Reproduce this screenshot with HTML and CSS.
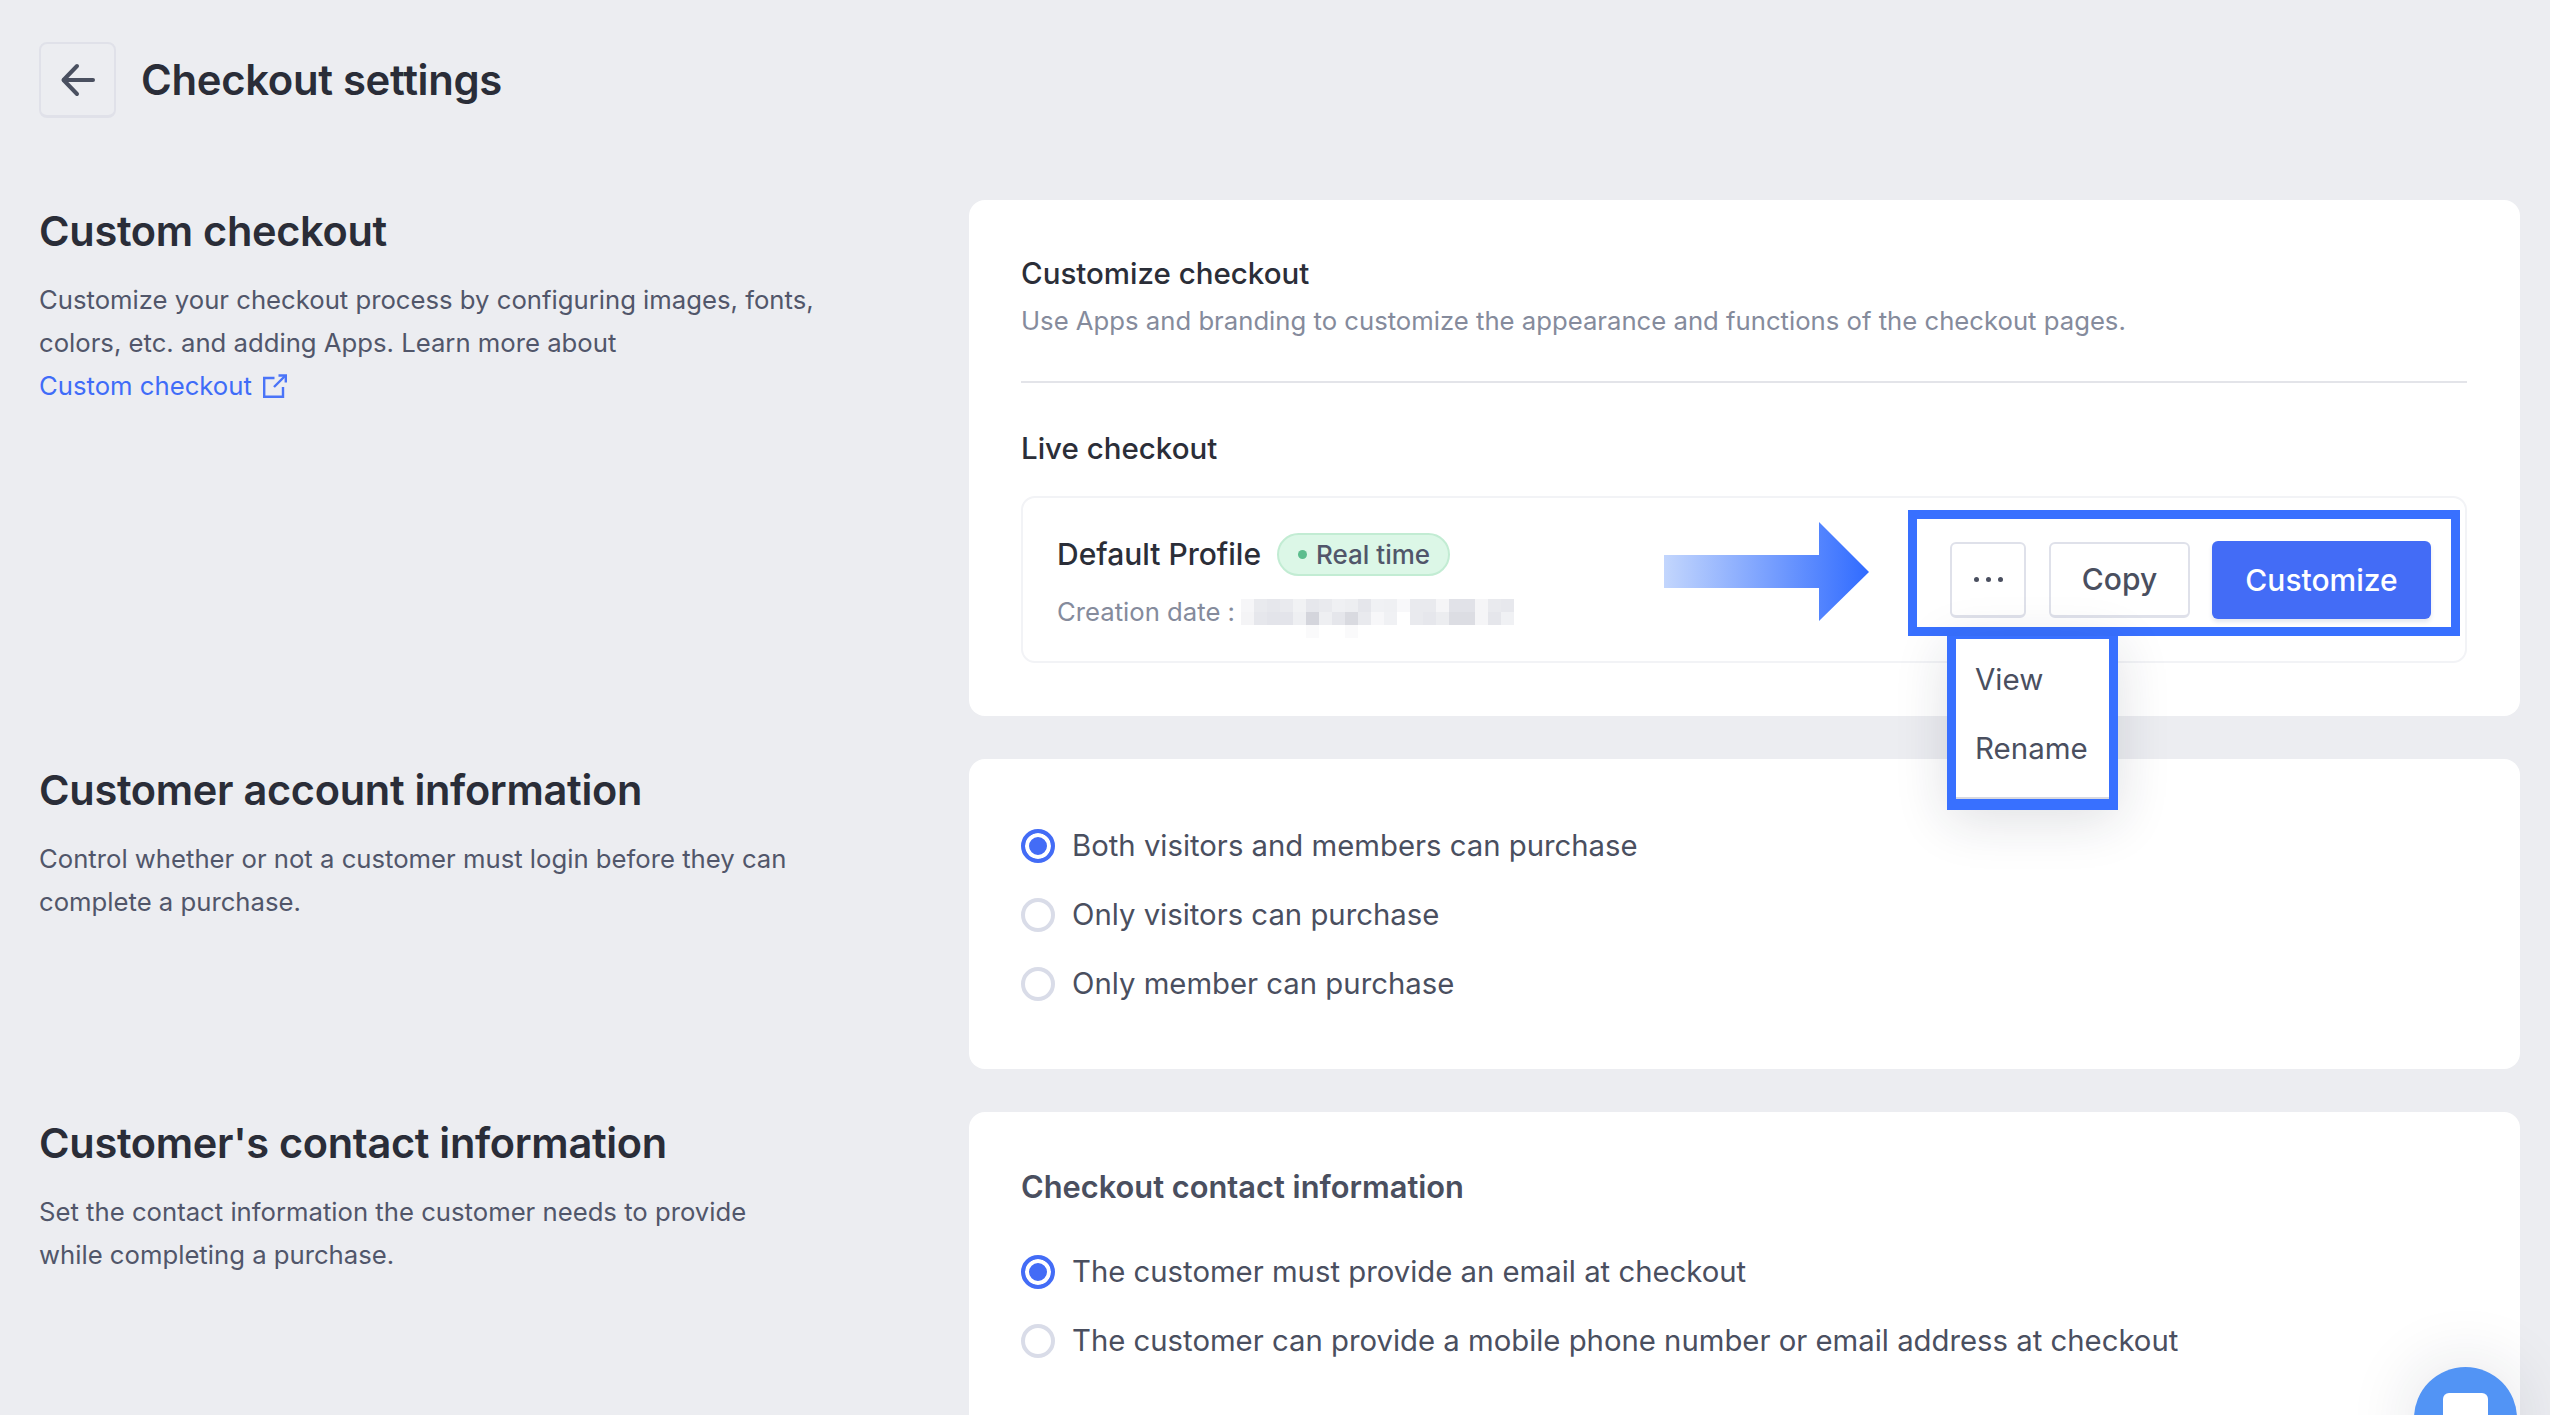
FILE: index.html
```html
<!DOCTYPE html>
<html>
<head>
  <meta charset="utf-8">
  <meta name="viewport" content="width=device-width, initial-scale=1.0">
  <title>Checkout settings</title>
  <link rel="stylesheet" href="styles.css">
</head>
<body>
  <header class="page-header">
    <a class="back-button" href="#" aria-label="Back">
      <svg width="36" height="36" viewBox="0 0 36 36" fill="none" stroke="#4a5060" stroke-width="4" stroke-linecap="round" stroke-linejoin="round">
        <path d="M33 18H4"/>
        <path d="M17 4L3.500 18L17 32"/>
      </svg>
    </a>
    <h1>Checkout settings</h1>
  </header>

  <section class="settings-row">
    <div class="intro">
      <h2>Custom checkout</h2>
      <p>Customize your checkout process by configuring images, fonts, colors, etc. and adding Apps. Learn more about
        <a class="intro-link" href="#">Custom checkout
          <svg width="24" height="24" viewBox="0 0 24 24" fill="none" stroke="#4a74f8" stroke-width="2.400">
            <path d="M11.500 4H1.200V22.800H20V13"/>
            <path d="M11 13L22 2"/>
            <path d="M15.500 1.500H22.800V8.500"/>
          </svg>
        </a>
      </p>
    </div>
    <div class="card">
      <h3 class="card-title">Customize checkout</h3>
      <p class="card-subtitle">Use Apps and branding to customize the appearance and functions of the checkout pages.</p>
      <hr class="divider">
      <h3 class="card-title live-title">Live checkout</h3>
      <div class="profile">
        <div class="profile-info">
          <div class="profile-name">
            <span>Default Profile</span>
            <span class="badge"><i class="badge-dot"></i>Real time</span>
          </div>
          <div class="profile-date">
            <span>Creation date :</span>
            <!-- blurred-out date, 21 columns of 13px cells -->
            <svg class="mosaic" width="273" height="39" viewBox="0 0 21 3" shape-rendering="crispEdges">
              <rect x="0" y="0" width="1" height="1" fill="#f6f6f8"/><rect x="1" y="0" width="1" height="1" fill="#e9eaee"/>
              <rect x="2" y="0" width="1" height="1" fill="#e6e7ec"/><rect x="3" y="0" width="1" height="1" fill="#e9eaee"/>
              <rect x="4" y="0" width="1" height="1" fill="#f1f2f4"/><rect x="5" y="0" width="1" height="1" fill="#e6e7ec"/>
              <rect x="6" y="0" width="1" height="1" fill="#e9eaee"/><rect x="7" y="0" width="1" height="1" fill="#eff0f3"/>
              <rect x="8" y="0" width="1" height="1" fill="#edeef1"/><rect x="9" y="0" width="1" height="1" fill="#e5e6eb"/>
              <rect x="10" y="0" width="1" height="1" fill="#f0f1f4"/><rect x="11" y="0" width="1" height="1" fill="#eff0f3"/>
              <rect x="12" y="0" width="1" height="1" fill="#f8f8fa"/><rect x="13" y="0" width="1" height="1" fill="#e9eaee"/>
              <rect x="14" y="0" width="1" height="1" fill="#e9eaee"/><rect x="15" y="0" width="1" height="1" fill="#f5f5f7"/>
              <rect x="16" y="0" width="1" height="1" fill="#e1e2e8"/><rect x="17" y="0" width="1" height="1" fill="#e1e2e8"/>
              <rect x="18" y="0" width="1" height="1" fill="#f5f5f7"/><rect x="19" y="0" width="1" height="1" fill="#e9eaee"/>
              <rect x="20" y="0" width="1" height="1" fill="#e7e8ed"/>
              <rect x="0" y="1" width="1" height="1" fill="#f4f4f6"/><rect x="1" y="1" width="1" height="1" fill="#e6e7ec"/>
              <rect x="2" y="1" width="1" height="1" fill="#e3e4ea"/><rect x="3" y="1" width="1" height="1" fill="#e3e4ea"/>
              <rect x="4" y="1" width="1" height="1" fill="#eeeff2"/><rect x="5" y="1" width="1" height="1" fill="#d4d5dc"/>
              <rect x="6" y="1" width="1" height="1" fill="#eeeff2"/><rect x="7" y="1" width="1" height="1" fill="#e5e6eb"/>
              <rect x="8" y="1" width="1" height="1" fill="#d9dae0"/><rect x="9" y="1" width="1" height="1" fill="#e9eaee"/>
              <rect x="10" y="1" width="1" height="1" fill="#f7f7f9"/><rect x="11" y="1" width="1" height="1" fill="#f0f1f4"/>
              <rect x="13" y="1" width="1" height="1" fill="#e9eaee"/><rect x="14" y="1" width="1" height="1" fill="#e6e7ec"/>
              <rect x="15" y="1" width="1" height="1" fill="#ecedf0"/><rect x="16" y="1" width="1" height="1" fill="#dcdde3"/>
              <rect x="17" y="1" width="1" height="1" fill="#dcdde3"/><rect x="18" y="1" width="1" height="1" fill="#f5f5f7"/>
              <rect x="19" y="1" width="1" height="1" fill="#e5e6eb"/><rect x="20" y="1" width="1" height="1" fill="#f0f1f4"/>
              <rect x="5" y="2" width="1" height="1" fill="#fafafb"/><rect x="8" y="2" width="1" height="1" fill="#fafafb"/>
            </svg>
          </div>
        </div>
        <div class="profile-actions">
          <button class="btn btn-more" aria-label="More">
            <i></i><i></i><i></i>
          </button>
          <button class="btn btn-copy">Copy</button>
          <button class="btn btn-primary">Customize</button>
        </div>

        <svg class="callout-arrow" width="205" height="99" viewBox="0 0 205 99">
          <defs>
            <linearGradient id="arrow-fill" x1="0" x2="1" y1="0" y2="0">
              <stop offset="0" stop-color="#c3d6fd"/>
              <stop offset="1" stop-color="#306bff"/>
            </linearGradient>
          </defs>
          <path d="M0 33H155V0L205 50L155 99V66H0Z" fill="url(#arrow-fill)"/>
        </svg>
        <div class="callout-box"></div>
        <div class="more-menu">
          <div class="more-item">View</div>
          <div class="more-item">Rename</div>
        </div>
      </div>
    </div>
  </section>

  <section class="settings-row">
    <div class="intro">
      <h2>Customer account information</h2>
      <p>Control whether or not a customer must login before they can complete a purchase.</p>
    </div>
    <div class="card card-options">
      <label class="option"><span class="radio radio-on"></span>Both visitors and members can purchase</label>
      <label class="option"><span class="radio"></span>Only visitors can purchase</label>
      <label class="option"><span class="radio"></span>Only member can purchase</label>
    </div>
  </section>

  <section class="settings-row">
    <div class="intro">
      <h2>Customer's contact information</h2>
      <p>Set the contact information the customer needs to provide while completing a purchase.</p>
    </div>
    <div class="card card-contact">
      <h3 class="contact-title">Checkout contact information</h3>
      <label class="option"><span class="radio radio-on"></span>The customer must provide an email at checkout</label>
      <label class="option"><span class="radio"></span>The customer can provide a mobile phone number or email address at checkout</label>
    </div>
  </section>

  <div class="chat-bubble"><span class="chat-icon"></span></div>
</body>
</html>
```

FILE: styles.css
```css
html, body {
  height: 100%;
  overflow: hidden;
}
body {
  margin: 0;
  padding: 42px 30px 0 39px;
  box-sizing: border-box;
  position: relative;
  background-color: #ecedf1;
  font-family: Inter, 'Noto Sans', Arial, sans-serif;
  color: #4a4f5f;
}
h1, h2, h3, p {
  margin: 0;
}

.page-header {
  display: flex;
  align-items: center;
  gap: 25px;
  margin-bottom: 82px;
}
.back-button {
  width: 77px;
  height: 76px;
  box-sizing: border-box;
  display: flex;
  align-items: center;
  justify-content: center;
  border: 2px solid #e0e1e9;
  border-bottom-width: 3px;
  border-radius: 8px;
}
h1 {
  font-size: 41.800px;
  font-weight: 600;
  letter-spacing: -0.3px;
  color: #2a2d38;
}

.settings-row {
  display: grid;
  grid-template-columns: 930px 1fr;
  margin-bottom: 43px;
}
.intro h2 {
  margin: 6px 0 22px;
  font-size: 41.500px;
  line-height: 50px;
  font-weight: 600;
  letter-spacing: -0.3px;
  color: #2a2d38;
}
.intro p {
  width: 778px;
  font-size: 25.700px;
  line-height: 43px;
  color: #51566a;
}
.intro-link {
  display: block;
  color: #3f6cf8;
  text-decoration: none;
}
.intro-link svg {
  vertical-align: -3px;
  margin-left: 4px;
}

.card {
  background-color: #fff;
  border-radius: 16px;
  padding: 51px 53px 53px 52px;
}
.card-title {
  font-size: 29.500px;
  line-height: 44px;
  font-weight: 500;
  color: #2b2e38;
}
.card-subtitle {
  margin-top: 6px;
  font-size: 25.700px;
  line-height: 40px;
  color: #858b9c;
}
.divider {
  margin: 40px 0 0;
  border: 0;
  border-top: 2px solid #e3e4e9;
}
.live-title {
  margin-top: 43px;
}

.profile {
  position: relative;
  margin-top: 26px;
  height: 167px;
  box-sizing: border-box;
  display: flex;
  align-items: center;
  justify-content: space-between;
  padding: 0 34px;
  border: 2px solid #f2f3f6;
  border-radius: 14px;
}
.profile-info {
  padding-top: 4px;
}
.profile-name {
  display: flex;
  align-items: center;
  gap: 16px;
  font-size: 30px;
  font-weight: 500;
  color: #2b2e38;
}
.badge {
  height: 43px;
  box-sizing: border-box;
  display: flex;
  align-items: center;
  margin-top: 2px;
  padding: 0 18px 0 19px;
  font-size: 26px;
  font-weight: 500;
  color: #51566a;
  background-color: #dcf7e7;
  border: 2px solid #c2ecd3;
  border-radius: 22px;
}
.badge-dot {
  width: 9px;
  height: 9px;
  margin-right: 9px;
  border-radius: 50%;
  background-color: #5cbd8d;
}
.profile-date {
  display: flex;
  align-items: flex-start;
  gap: 6px;
  height: 40px;
  margin-top: 16px;
  font-size: 25.700px;
  line-height: 40px;
  color: #858b9c;
}
.mosaic {
  flex: none;
  margin-top: 7px;
}
.profile-actions {
  display: flex;
  align-items: center;
  gap: 22px;
}
.btn {
  height: 76px;
  box-sizing: border-box;
  font-family: inherit;
  font-size: 30px;
  font-weight: 500;
  border: 2px solid #dfe1ea;
  border-bottom-width: 3px;
  border-radius: 6px;
  background-color: #fff;
  color: #4a4f5f;
}
.btn-more {
  width: 76px;
  margin-right: 1px;
  display: flex;
  align-items: center;
  justify-content: center;
  gap: 7px;
}
.btn-more i {
  width: 5px;
  height: 5px;
  border-radius: 50%;
  background-color: #4a4f5f;
}
.btn-copy {
  width: 141px;
}
.btn-primary {
  width: 219px;
  height: 78px;
  color: #fff;
  background-color: #436cf6;
  border: 0;
  box-shadow: 0 3px 4px rgba(40, 60, 120, 0.12);
}

.callout-arrow {
  position: absolute;
  left: 641px;
  top: 24px;
}
.callout-box {
  position: absolute;
  top: 12px;
  right: 5px;
  width: 552px;
  height: 126px;
  box-sizing: border-box;
  border: 9px solid #3870ff;
}
.more-menu {
  position: absolute;
  z-index: 2;
  top: 138px;
  left: 924px;
  width: 171px;
  height: 174px;
  box-sizing: border-box;
  padding: 6px 0 0 19px;
  background-color: #fff;
  border: 9px solid #3870ff;
  border-top-width: 3px;
  border-bottom-width: 11px;
  box-shadow: inset 0 -2px 0 #d8d9e0, 0 10px 50px rgba(30, 35, 60, 0.14);
}
.more-item {
  height: 69px;
  line-height: 69px;
  font-size: 29.500px;
  color: #4a4f5f;
}

.card-options {
  padding: 52px 52px 51px;
}
.card-contact {
  padding: 53px 53px 100px 52px;
}
.contact-title {
  margin-bottom: 28px;
  font-size: 30.800px;
  line-height: 44px;
  font-weight: 600;
  color: #4a4f5f;
}
.option {
  display: flex;
  align-items: center;
  gap: 17px;
  height: 69px;
  font-size: 29.300px;
  color: #4a4f5f;
}
.radio {
  width: 34px;
  height: 34px;
  box-sizing: border-box;
  flex: none;
  border: 4px solid #d9dce8;
  border-radius: 50%;
}
.radio-on {
  border-color: #436cf6;
  background-color: #436cf6;
  box-shadow: inset 0 0 0 4px #fff;
}

.chat-bubble {
  position: absolute;
  left: 2414px;
  top: 1367px;
  width: 103px;
  height: 103px;
  border-radius: 50%;
  background-color: #5294f5;
  box-shadow: 0 0 70px rgba(30, 35, 60, 0.14);
}
.chat-icon {
  position: absolute;
  left: 29px;
  top: 26px;
  width: 45px;
  height: 40px;
  border-radius: 6px;
  background-color: #fff;
}
```
